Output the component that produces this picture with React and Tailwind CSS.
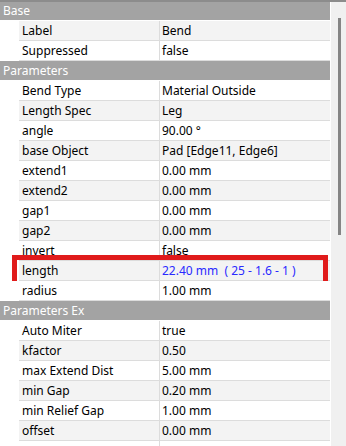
import React from 'react';

const sections = [
  {
    title: 'Base',
    rows: [
      ['Label', 'Bend'],
      ['Suppressed', 'false'],
    ],
  },
  {
    title: 'Parameters',
    rows: [
      ['Bend Type', 'Material Outside'],
      ['Length Spec', 'Leg'],
      ['angle', '90.00 °'],
      ['base Object', 'Pad [Edge11, Edge6]'],
      ['extend1', '0.00 mm'],
      ['extend2', '0.00 mm'],
      ['gap1', '0.00 mm'],
      ['gap2', '0.00 mm'],
      ['invert', 'false'],
      ['length', '22.40 mm  ( 25 - 1.6 - 1 )', true],
      ['radius', '1.00 mm'],
    ],
  },
  {
    title: 'Parameters Ex',
    rows: [
      ['Auto Miter', 'true'],
      ['kfactor', '0.50'],
      ['max Extend Dist', '5.00 mm'],
      ['min Gap', '0.20 mm'],
      ['min Relief Gap', '1.00 mm'],
      ['offset', '0.00 mm'],
      ['', ''],
    ],
  },
];

function Row({ name, value, alt, expr }) {
  return (
    <div className={`relative flex h-[20px] border-b border-[#dcdcdc] ${alt ? 'bg-[#f3f3f3]' : 'bg-white'}`}>
      <div className="w-[19px] shrink-0 bg-white -mb-px" />
      <div className="w-[141px] shrink-0 border-r border-[#dcdcdc] pl-[3px] leading-[19px] whitespace-nowrap">
        {name}
      </div>
      <div className={`flex-1 pl-[2px] leading-[19px] whitespace-pre ${expr ? 'text-[#2a2aff]' : ''}`}>
        {value}
      </div>
      {/* red highlight round the edited row */}
      {expr && (
        <div className="absolute left-[12px] top-[-6px] w-[316px] h-[33px] border-[5px] border-[#e01b1b] pointer-events-none" />
      )}
    </div>
  );
}

export default function App() {
  let idx = 0;
  return (
    <div
      className="w-[346px] h-[446px] overflow-hidden bg-white text-[12px] text-black flex border-t-2 border-[#8c8c8c]"
      style={{ fontFamily: '"Noto Sans", "Open Sans", sans-serif' }}
    >
      <div className="w-[330px] shrink-0">
        {sections.map((s, si) => {
          idx++;
          return (
            <div key={s.title}>
              <div
                className={`${si === 0 ? 'h-[19px] leading-[18px]' : 'h-[20px] leading-[19px]'} bg-[#a3a3a3] text-white pl-[3px] border-b border-white`}
              >
                {s.title}
              </div>
              {s.rows.map(([n, v, expr]) => {
                const alt = idx % 2 === 1;
                idx++;
                return <Row key={n + idx} name={n} value={v} alt={alt} expr={expr} />;
              })}
            </div>
          );
        })}
      </div>
      <div className="flex-1 bg-[#f0f0f0] border-l border-white flex justify-center pt-[16px]">
        <div className="w-[3px] h-[217px] bg-[#858585] ml-[2px]" />
      </div>
    </div>
  );
}
